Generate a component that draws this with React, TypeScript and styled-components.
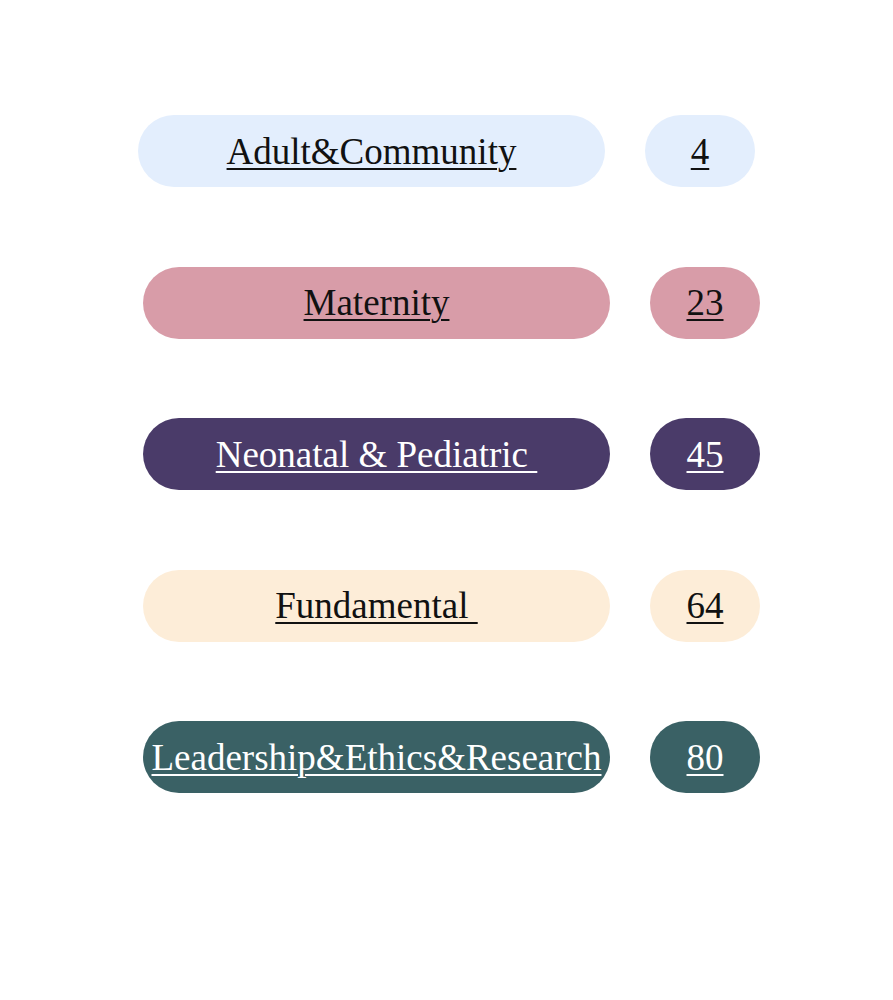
import React from "react";
import styled, { createGlobalStyle } from "styled-components";

const Global = createGlobalStyle`
  html, body { margin: 0; padding: 0; background: #ffffff; }
  body { font-family: "Liberation Serif", "Times New Roman", serif; }
`;

const Page = styled.div`
  display: flex;
  flex-direction: column;
  gap: 79.5px;
  padding-top: 115px;
  width: 893px;
  height: 1000px;
  box-sizing: border-box;
`;

const Row = styled.div<{ $indent: number }>`
  display: flex;
  align-items: center;
  gap: 40px;
  padding-left: ${(p) => p.$indent}px;
`;

const Pill = styled.a<{ $bg: string; $fg: string; $w: number }>`
  display: flex;
  align-items: center;
  justify-content: center;
  width: ${(p) => p.$w}px;
  height: 72px;
  border-radius: 36px;
  background: ${(p) => p.$bg};
  color: ${(p) => p.$fg};
  font-size: 37px;
  line-height: 1;
  text-decoration: underline;
  text-decoration-thickness: 2px;
  text-underline-offset: 4px;
  white-space: pre;
  cursor: pointer;
`;

const rows = [
  { name: "Adult&Community", count: "4", bg: "#e3eefd", fg: "#111111", indent: 138 },
  { name: "Maternity", count: "23", bg: "#d89ca8", fg: "#111111", indent: 143 },
  { name: "Neonatal & Pediatric ", count: "45", bg: "#4a3b69", fg: "#ffffff", indent: 143 },
  { name: "Fundamental ", count: "64", bg: "#fdedd8", fg: "#111111", indent: 143 },
  { name: "Leadership&Ethics&Research", count: "80", bg: "#3a6165", fg: "#ffffff", indent: 143 },
];

export default function App() {
  return (
    <>
      <Global />
      <Page>
        {rows.map((r) => (
          <Row key={r.name} $indent={r.indent}>
            <Pill $bg={r.bg} $fg={r.fg} $w={467}>
              {r.name}
            </Pill>
            <Pill $bg={r.bg} $fg={r.fg} $w={110}>
              {r.count}
            </Pill>
          </Row>
        ))}
      </Page>
    </>
  );
}
